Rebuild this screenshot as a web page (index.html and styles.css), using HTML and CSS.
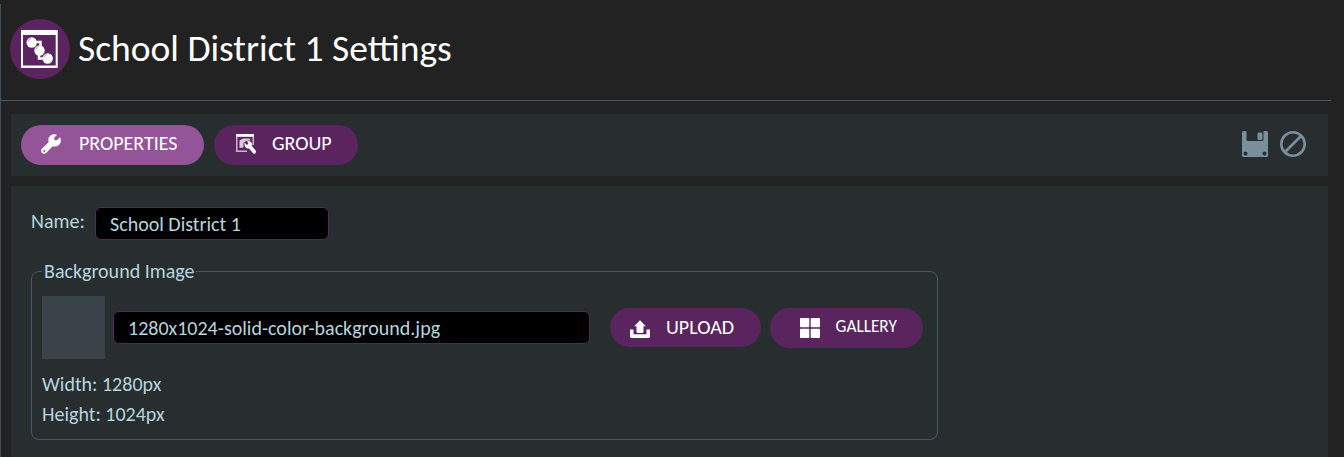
FILE: index.html
```
<!DOCTYPE html>
<html lang="en">
<head>
<meta charset="utf-8">
<title>School District 1 Settings</title>
<link rel="stylesheet" href="styles.css">
</head>
<body>
<main class="page">
  <header class="header">
    <svg class="header-icon" viewBox="0 0 60 60">
      <circle cx="30" cy="30" r="30" fill="#5a245f"/>
      <path fill="#fff" fill-rule="evenodd" d="M11 11H47.700V49H11ZM13 16V46.500H45.700V16Z"/>
      <path fill="none" stroke="#fff" stroke-width="2.500" d="M24 23H30.500V28M29 34V39.500H35"/>
      <circle cx="21.700" cy="23.500" r="5.200" fill="#fff"/>
      <circle cx="29.500" cy="31.500" r="5.200" fill="#fff"/>
      <circle cx="37.700" cy="39.500" r="5.200" fill="#fff"/>
      <path fill="none" stroke="#5a245f" stroke-width=".5" d="M18.300 22.500a4 4 0 0 1 3-3M25.800 30.500a4 4 0 0 1 3-3M33.800 38.500a4 4 0 0 1 3-3"/>
    </svg>
    <h1 class="title">School District 1 Settings</h1>
  </header>

  <nav class="toolbar">
    <button class="pill properties active">
      <svg class="icon" viewBox="0 0 20 20"><path fill="#fff" d="M18.900 3.200 15.800 6.300 13.500 6 13.200 3.700 16 .8C12.500-.8 8 1.300 7.400 5c-.2 1.300 0 2.200.2 3.200L.8 14.700c-1.300 1.300-.8 3.300.3 4.300 1.300 1.200 3.200 1 4.300-.2l6.300-6.500C15.500 13.500 19.500 11 19.900 7c.1-1.500-.3-2.800-1-3.800ZM3.300 18a1 1 0 1 1 0-2 1 1 0 0 1 0 2Z"/></svg>
      <span>PROPERTIES</span>
    </button>
    <button class="pill group">
      <svg class="icon" viewBox="0 0 20 20">
        <path fill="#c9b5cb" fill-rule="evenodd" d="M0 0H18V11H16.500V3H1.500V16.500H11V18H0Z"/>
        <path fill="#fff" d="M0 0H18V2.500H0Z"/>
        <path fill="#d9c9db" d="M3.500 6.500 7 4.500H13.500L14.500 6.500 10 7 7.500 9V13.500L3.500 14Z"/>
        <path fill="#fff" d="M8.500 8.500 11 11 12.500 9.500 11 7.500C14.500 6.500 16.800 9 16 12L20 17 19.500 19.500 17.500 19.800 13 14.500C10 15 8 12 8.500 8.500Z"/>
      </svg>
      <span>GROUP</span>
    </button>
    <div class="actions">
      <svg class="action" viewBox="0 0 26 26"><path fill="#78909c" fill-rule="evenodd" d="M1.500 0H3.500Q4.500 0 4.500 1V8.500Q4.500 10 6 10H20Q21.500 10 21.500 8.500V1Q21.500 0 22.500 0H24.500Q26 0 26 1.500V24.500Q26 26 24.500 26H1.500Q0 26 0 24.500V1.500Q0 0 1.500 0ZM3.500 20.500a2 2 0 1 0 0 4 2 2 0 0 0 0-4ZM22.500 20.500a2 2 0 1 0 0 4 2 2 0 0 0 0-4Z"/><rect x="15.500" y="1.500" width="5" height="7.500" rx="1.500" fill="#78909c"/></svg>
      <svg class="action" viewBox="0 0 26 26"><g fill="none" stroke="#78909c" stroke-width="2.600"><circle cx="13" cy="13" r="11.700"/><path d="M5 21 21 5"/></g></svg>
    </div>
  </nav>

  <section class="panel">
    <div class="name-row">
      <label class="label" for="name">Name:</label>
      <input class="field name-field" id="name" value="School District 1">
    </div>
    <fieldset class="background">
      <legend class="legend">Background Image</legend>
      <div class="image-row">
        <div class="thumb"></div>
        <input class="field file-field" aria-label="Background file" value="1280x1024-solid-color-background.jpg">
        <button class="pill upload">
          <svg class="icon" viewBox="0 0 20 20"><path fill="#fff" d="M10 2.300 15.800 8.300H13.500V13.500Q13.500 15 12 15H8Q6.500 15 6.500 13.500V8.300H4.200Z"/><path fill="#fff" d="M0 11.500H3.500V16.300H16.500V11.500H20V18.500Q20 20 18.500 20H1.500Q0 20 0 18.500Z"/></svg>
          <span>UPLOAD</span>
        </button>
        <button class="pill gallery">
          <svg class="icon" viewBox="0 0 20 20"><g fill="#fff"><rect width="9.300" height="9.300" rx=".8"/><rect x="10.700" width="9.300" height="9.300" rx=".8"/><rect y="10.700" width="9.300" height="9.300" rx=".8"/><rect x="10.700" y="10.700" width="9.300" height="9.300" rx=".8"/></g></svg>
          <span>GALLERY</span>
        </button>
      </div>
      <p class="meta width">Width: 1280px</p>
      <p class="meta height">Height: 1024px</p>
    </fieldset>
  </section>
</main>
</body>
</html>
```
FILE: styles.css
```
* { box-sizing: border-box; }
html, body { height: 100%; }
body {
  margin: 0;
  padding-top: 4px;
  background: #222;
  color: #b8d4de;
  font-family: Calibri, Carlito, Lato, sans-serif;
  font-size: 20px;
  overflow: hidden;
}
.page { height: 453px; border-left: 1px solid #3f5159; }
.header {
  display: flex;
  width: 1330px;
  height: 97px;
  padding: 15px 0 0 9px;
  gap: 8px;
  border-bottom: 1px solid #455a64;
}
.header-icon { width: 60px; height: 60px; }
.title {
  margin: 0;
  color: #fff;
  font-size: 37.5px;
  font-weight: 400;
  line-height: 58px;
  white-space: nowrap;
}
.toolbar {
  display: flex;
  align-items: center;
  width: 1317px;
  height: 62px;
  margin: 13px 0 10px 10px;
  padding: 0 22px 0 10px;
  gap: 10px;
  background: #282d30;
}
.pill {
  display: flex;
  align-items: center;
  flex: none;
  height: 40px;
  padding: 0;
  border: 0;
  border-radius: 20px;
  background: #5a245f;
  color: #fff;
  font-family: inherit;
  font-size: 20px;
  white-space: nowrap;
}
.icon { flex: none; width: 20px; height: 20px; }
.pill span { padding-bottom: 4px; }
.active { background: #935597; }
.properties { width: 183px; padding-left: 20px; gap: 18px; }
.group { width: 144px; padding-left: 22px; gap: 16px; }
.properties .icon, .group .icon { margin-bottom: 2px; }
.actions { display: flex; gap: 12px; margin-left: auto; padding-bottom: 2px; }
.action { width: 26px; height: 26px; }
.panel {
  width: 1317px;
  height: 271px;
  margin-left: 10px;
  padding: 21px 20px 0;
  background: #282d30;
}
.name-row { display: flex; height: 33px; }
.label { width: 64px; line-height: 28px; }
.field {
  height: 33px;
  padding: 0 14px;
  border: 1px solid #5a245f;
  border-radius: 6px;
  background: #000;
  color: #b8d4de;
  font-family: inherit;
  font-size: 20px;
}
.name-field { width: 234px; }
.background {
  width: 907px;
  height: 180px;
  margin: 20px 0 0;
  padding: 0 10px;
  border: 1px solid #455a64;
  border-radius: 8px;
}
.legend { height: 22px; padding: 0 2px; line-height: 22px; }
.image-row { display: flex; height: 63px; margin-top: 14px; }
.thumb { width: 63px; height: 63px; margin-right: 8px; background: #3b434a; }
.file-field { width: 477px; margin: 15px 20px 0 0; }
.upload { width: 151px; height: 39px; margin: 12px 9px 0 0; padding-left: 20px; gap: 16px; }
.upload span { padding-bottom: 2px; }
.gallery { width: 153px; margin-top: 12px; padding-left: 30px; gap: 15.5px; font-size: 17.3px; }
.meta { margin: 0; line-height: 30px; }
.width { margin-top: 10px; }
```
